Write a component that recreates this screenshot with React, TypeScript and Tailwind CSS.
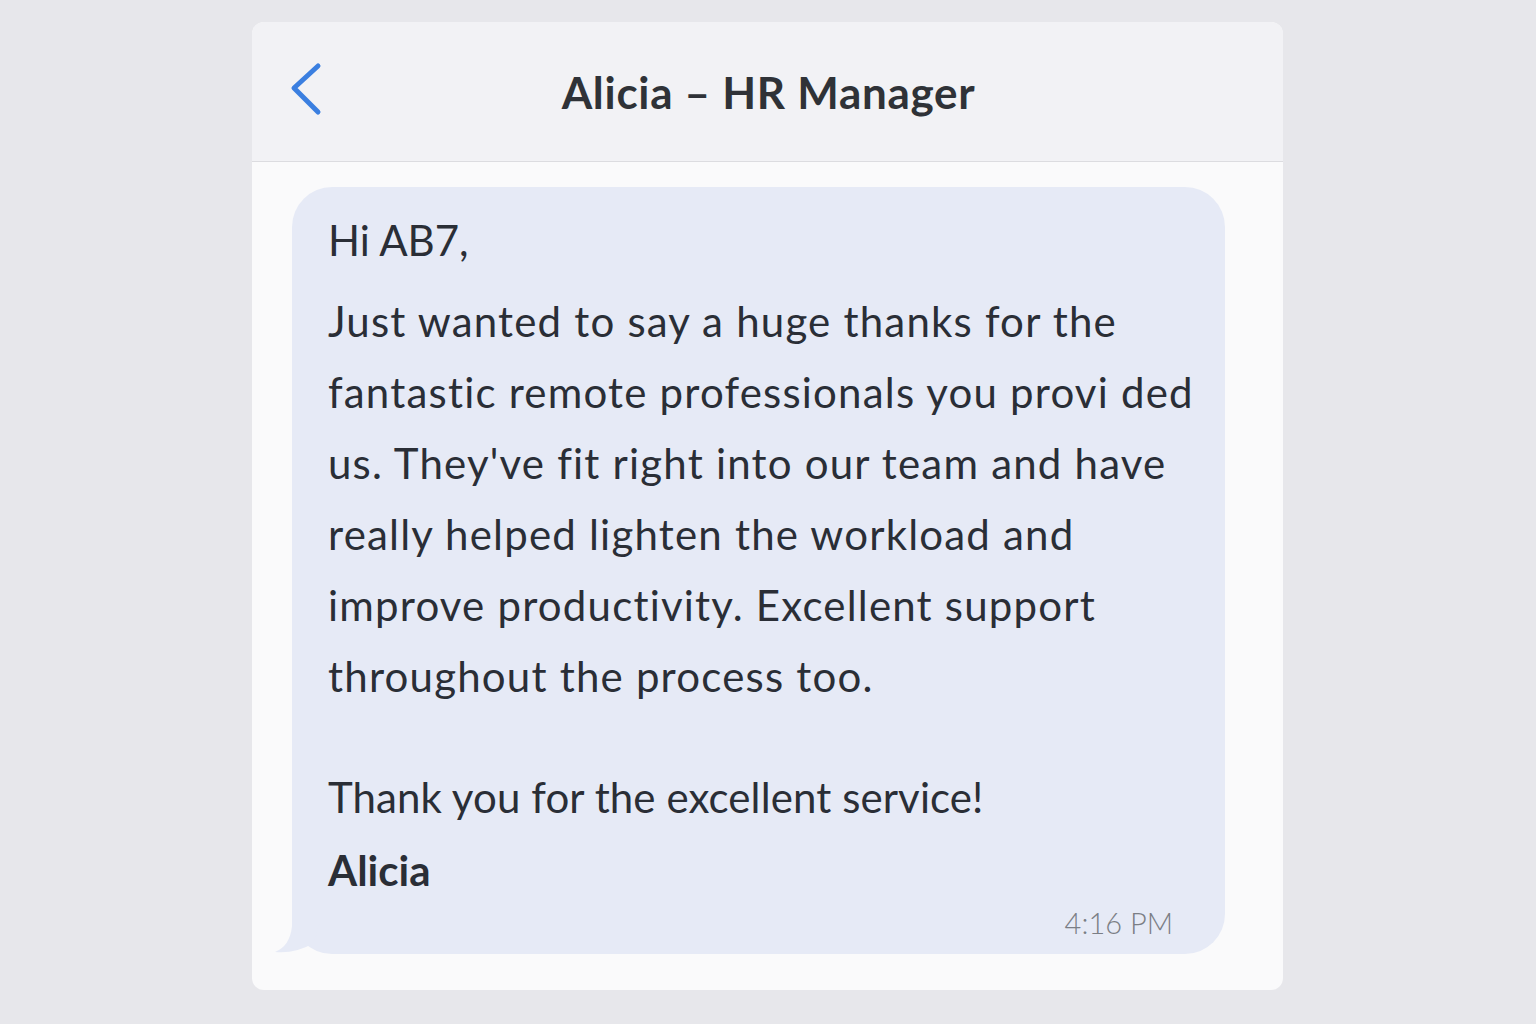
import React from 'react';

const lines = [
  'Just wanted to say a huge thanks for the',
  'fantastic remote professionals you provi ded',
  "us. They've fit right into our team and have",
  'really helped lighten the workload and',
  'improve productivity. Excellent support',
  'throughout the process too.',
];

function BackChevron() {
  return (
    <svg width="40" height="60" viewBox="0 0 40 60" fill="none">
      <path d="M34 6 L10 28 L34 52" stroke="#3b7fe0" strokeWidth="5" strokeLinecap="round" strokeLinejoin="round" />
    </svg>
  );
}

function BubbleTail() {
  return (
    <svg className="absolute left-[-17px] bottom-0" width="60" height="60" viewBox="0 0 60 60">
      <path d="M17 7 L17 32 Q15 52 0 58 Q20 60 39 49 L45 27 Z" fill="#e6eaf6" />
    </svg>
  );
}

export default function App() {
  return (
    <div className="min-h-screen w-full bg-[#e7e7eb] pt-[22px] pl-[252px] font-['Lato',sans-serif] [font-variant-ligatures:none]">
      <div className="w-[1031px] h-[968px] rounded-[12px] overflow-hidden bg-[#fafafb] flex flex-col">
        <div className="h-[140px] shrink-0 bg-[#f2f2f5] border-b border-[#dcdce0] relative flex items-center justify-center">
          <div className="absolute left-[32px] top-[38px]">
            <BackChevron />
          </div>
          <h1 className="text-[44px] font-bold text-[#2f3237] tracking-[0.7px] pl-[2px]">Alicia – HR Manager</h1>
        </div>

        <div className="pt-[25px] pl-[40px] pr-[58px]">
          <div className="relative rounded-[40px] bg-[#e6eaf6] pl-[36px] pr-[20px] pt-[18px] pb-[10px] text-[#2a2e36]">
            <BubbleTail />
            <p className="text-[42px] leading-[71px]">Hi AB7,</p>
            <div className="mt-[10px] text-[42px] leading-[71px] tracking-[1.2px]">
              {lines.map(l => (
                <p key={l} className="whitespace-nowrap">{l}</p>
              ))}
            </div>
            <p className="mt-[50px] text-[42px] leading-[71px] tracking-[0.1px]">Thank you for the excellent service!</p>
            <p className="mt-[2px] text-[42px] leading-[71px] font-bold">Alicia</p>
            <div className="flex justify-end pr-[32px] -mt-[3px] pb-[1px]">
              <span className="text-[29px] leading-[40px] text-[#7b7e85] font-light">4:16 PM</span>
            </div>
          </div>
        </div>
      </div>
    </div>
  );
}
